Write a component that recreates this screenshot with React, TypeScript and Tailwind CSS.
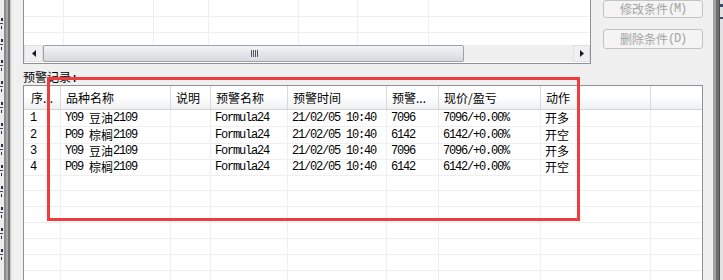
import React from "react";

const mono = "font-['Liberation_Mono',monospace] tracking-[-1.2px] whitespace-pre";
const cjk = "font-['Noto_Sans_CJK_SC',sans-serif] whitespace-pre";

// SimSun-style text: ascii runs half width, CJK runs full width
const Txt: React.FC<{ s: string }> = ({ s }) => {
  const parts = s.match(/[\x00-\x7f]+|[^\x00-\x7f]+/g) ?? [];
  return (
    <>
      {parts.map((p, i) =>
        /^[\x00-\x7f]/.test(p) ? (
          <span key={i} className={mono}>
            {p}
          </span>
        ) : (
          <span key={i} className={cjk}>
            {p}
          </span>
        )
      )}
    </>
  );
};

const tableCols =
  "grid grid-cols-[37px_110px_40px_77px_99px_52px_102px_110px_1fr]";
const topCols = "grid grid-cols-[40px_90px_55px_90px_59px_71px_1fr]";

const headers = ["序...", "品种名称", "说明", "预警名称", "预警时间", "预警...", "现价/盈亏", "动作", ""];

const records = [
  ["1", "Y09 豆油2109", "", "Formula24", "21/02/05 10:40", "7096", "7096/+0.00%", "开多"],
  ["2", "P09 棕榈2109", "", "Formula24", "21/02/05 10:40", "6142", "6142/+0.00%", "开空"],
  ["3", "Y09 豆油2109", "", "Formula24", "21/02/05 10:40", "7096", "7096/+0.00%", "开多"],
  ["4", "P09 棕榈2109", "", "Formula24", "21/02/05 10:40", "6142", "6142/+0.00%", "开空"],
];

// window behind: only slivers of its glyphs show at the very left
const LeftEdge = () => (
  <div className="flex h-full w-[12px] shrink-0">
    <div className="flex h-full w-[4px] flex-col bg-[#ececec] pt-[18px]">
      {[0, 1, 2, 3, 4, 5, 6, 7, 8, 9, 10, 11].map((i) => (
        <div key={i} className="flex h-[21px] flex-col gap-[2px]">
          <div className="ml-[1px] h-[3px] w-[2px] bg-[#2a2e44]" />
          <div className="h-[1px] w-[3px] bg-[#3c4260]" />
          <div className="ml-[1px] h-[3px] w-[1px] bg-[#2a2e44]" />
        </div>
      ))}
    </div>
    <div className="h-full w-[2px] bg-[#8a8a8a]" />
    <div className="h-full w-[2px] bg-[#a9a9a9]" />
    <div className="h-full w-[2px] bg-[#767676]" />
    <div className="h-full w-[1px] bg-[#c9c9c9]" />
    <div className="h-full w-[1px] bg-[#e6e6e6]" />
  </div>
);

const RightEdge = () => (
  <div className="flex h-full w-[10px] shrink-0">
    <div className="h-full w-[3px] bg-[#a3a3a3]" />
    <div className="h-full w-[3px] bg-[#6e6e6e]" />
    <div className="h-full w-[1px] bg-[#4e4e4e]" />
    <div className="flex h-full w-[3px] flex-col bg-[#e2e2e2]">
      <div className="mt-[4px] h-[3px] w-[3px] bg-[#3b4a6b]" />
      <div className="mt-[10px] h-[2px] w-[3px] bg-[#3b4a6b]" />
    </div>
  </div>
);

const TopList = () => (
  <div className="flex h-[64px] w-[568px] shrink-0 flex-col border-x border-b border-[#8e9196] bg-white">
    <div className="flex h-[45px] flex-col">
      {[17, 16, 12].map((h, r) => (
        <div
          key={r}
          className={`${topCols} ${h === 17 ? "h-[17px] border-b" : h === 16 ? "h-[16px] border-b" : "h-[12px]"} border-[#efefef]`}
        >
          {Array.from({ length: 7 }).map((_, c) => (
            <div key={c} className={c < 6 ? "border-r border-[#efefef]" : ""} />
          ))}
        </div>
      ))}
    </div>
    <div className="flex h-[17px] bg-[#ebebeb]">
      <div className="flex w-[19px] items-center justify-center border border-[#e0e0e0] bg-[#f0f0f0]">
        <svg width="4" height="7" viewBox="0 0 4 7">
          <polygon points="4,0 4,7 0,3.5" fill="#1a1a1a" />
        </svg>
      </div>
      <div className="flex w-[421px] items-center justify-center rounded-[2px] border border-[#9ea3aa] bg-linear-to-b from-[#f3f4f6] to-[#d6dade]">
        <div className="ml-[2px] flex gap-[1px]">
          {[0, 1, 2, 3].map((i) => (
            <div key={i} className="h-[7px] w-[1px] bg-[#4f5661]" />
          ))}
        </div>
      </div>
      <div className="flex-1 bg-[#efefef]" />
      <div className="flex w-[17px] items-center justify-center border border-[#e0e0e0] bg-[#f0f0f0]">
        <svg width="4" height="7" viewBox="0 0 4 7">
          <polygon points="0,0 0,7 4,3.5" fill="#1a1a1a" />
        </svg>
      </div>
    </div>
    <div className="h-[1px] bg-white" />
  </div>
);

const DisabledButton: React.FC<{ label: string; short?: boolean }> = ({ label, short }) => (
  <div
    className={`flex w-[100px] items-center justify-center rounded-[3px] border border-[#c3c3c3] bg-[#f4f4f4] text-[12px] leading-[14px] text-[#a3a3a3] ${short ? "h-[18px]" : "h-[20px]"}`}
  >
    <Txt s={label} />
  </div>
);

export default function App() {
  return (
    <div className="relative flex h-[280px] w-[723px] overflow-hidden bg-[#f0f0f0] font-['Noto_Sans_CJK_SC',sans-serif] text-[12px] text-black">
      <LeftEdge />
      <div className="flex w-[701px] shrink-0 flex-col pl-[11px] pr-[10px]">
        <div className="flex items-start">
          <TopList />
          <div className="ml-[12px] flex flex-col gap-[11px]">
            <DisabledButton label="修改条件(M)" short />
            <DisabledButton label="删除条件(D)" />
          </div>
        </div>

        <div className="mt-[5px] h-[16px] leading-[16px]">
          <Txt s="预警记录:" />
        </div>

        <div className="flex-1 border border-[#8e9196] bg-white">
          <div className={`${tableCols} border-b border-[#d5d5d5] bg-linear-to-b from-white from-45% to-[#eef0f2]`}>
            {headers.map((h, i) => (
              <div
                key={i}
                className={`flex h-[23px] items-center whitespace-nowrap leading-[16px] ${i === 0 ? "pl-[7px]" : "pl-[5px]"} ${i < 8 ? "border-r border-[#d9d9d9]" : ""}`}
              >
                {h}
              </div>
            ))}
          </div>
          {Array.from({ length: 11 }).map((_, r) => {
            const row = records[r] ?? ["", "", "", "", "", "", "", ""];
            return (
              <div key={r} className={`${tableCols} ${r === 0 ? "h-[17px]" : "h-[16px]"}`}>
                {[...row, ""].map((v, c) => (
                  <div
                    key={c}
                    className={`flex items-center border-b border-[#efefef] leading-[16px] ${c === 0 ? "pl-[6px]" : "pl-[4px]"} ${c < 8 ? "border-r" : ""}`}
                  >
                    {v && <Txt s={v} />}
                  </div>
                ))}
              </div>
            );
          })}
        </div>
      </div>
      <RightEdge />

      {/* red annotation box */}
      <div className="absolute left-[47px] top-[77px] h-[144px] w-[533px] border-[3px] border-[#f03c3c]" />
    </div>
  );
}
